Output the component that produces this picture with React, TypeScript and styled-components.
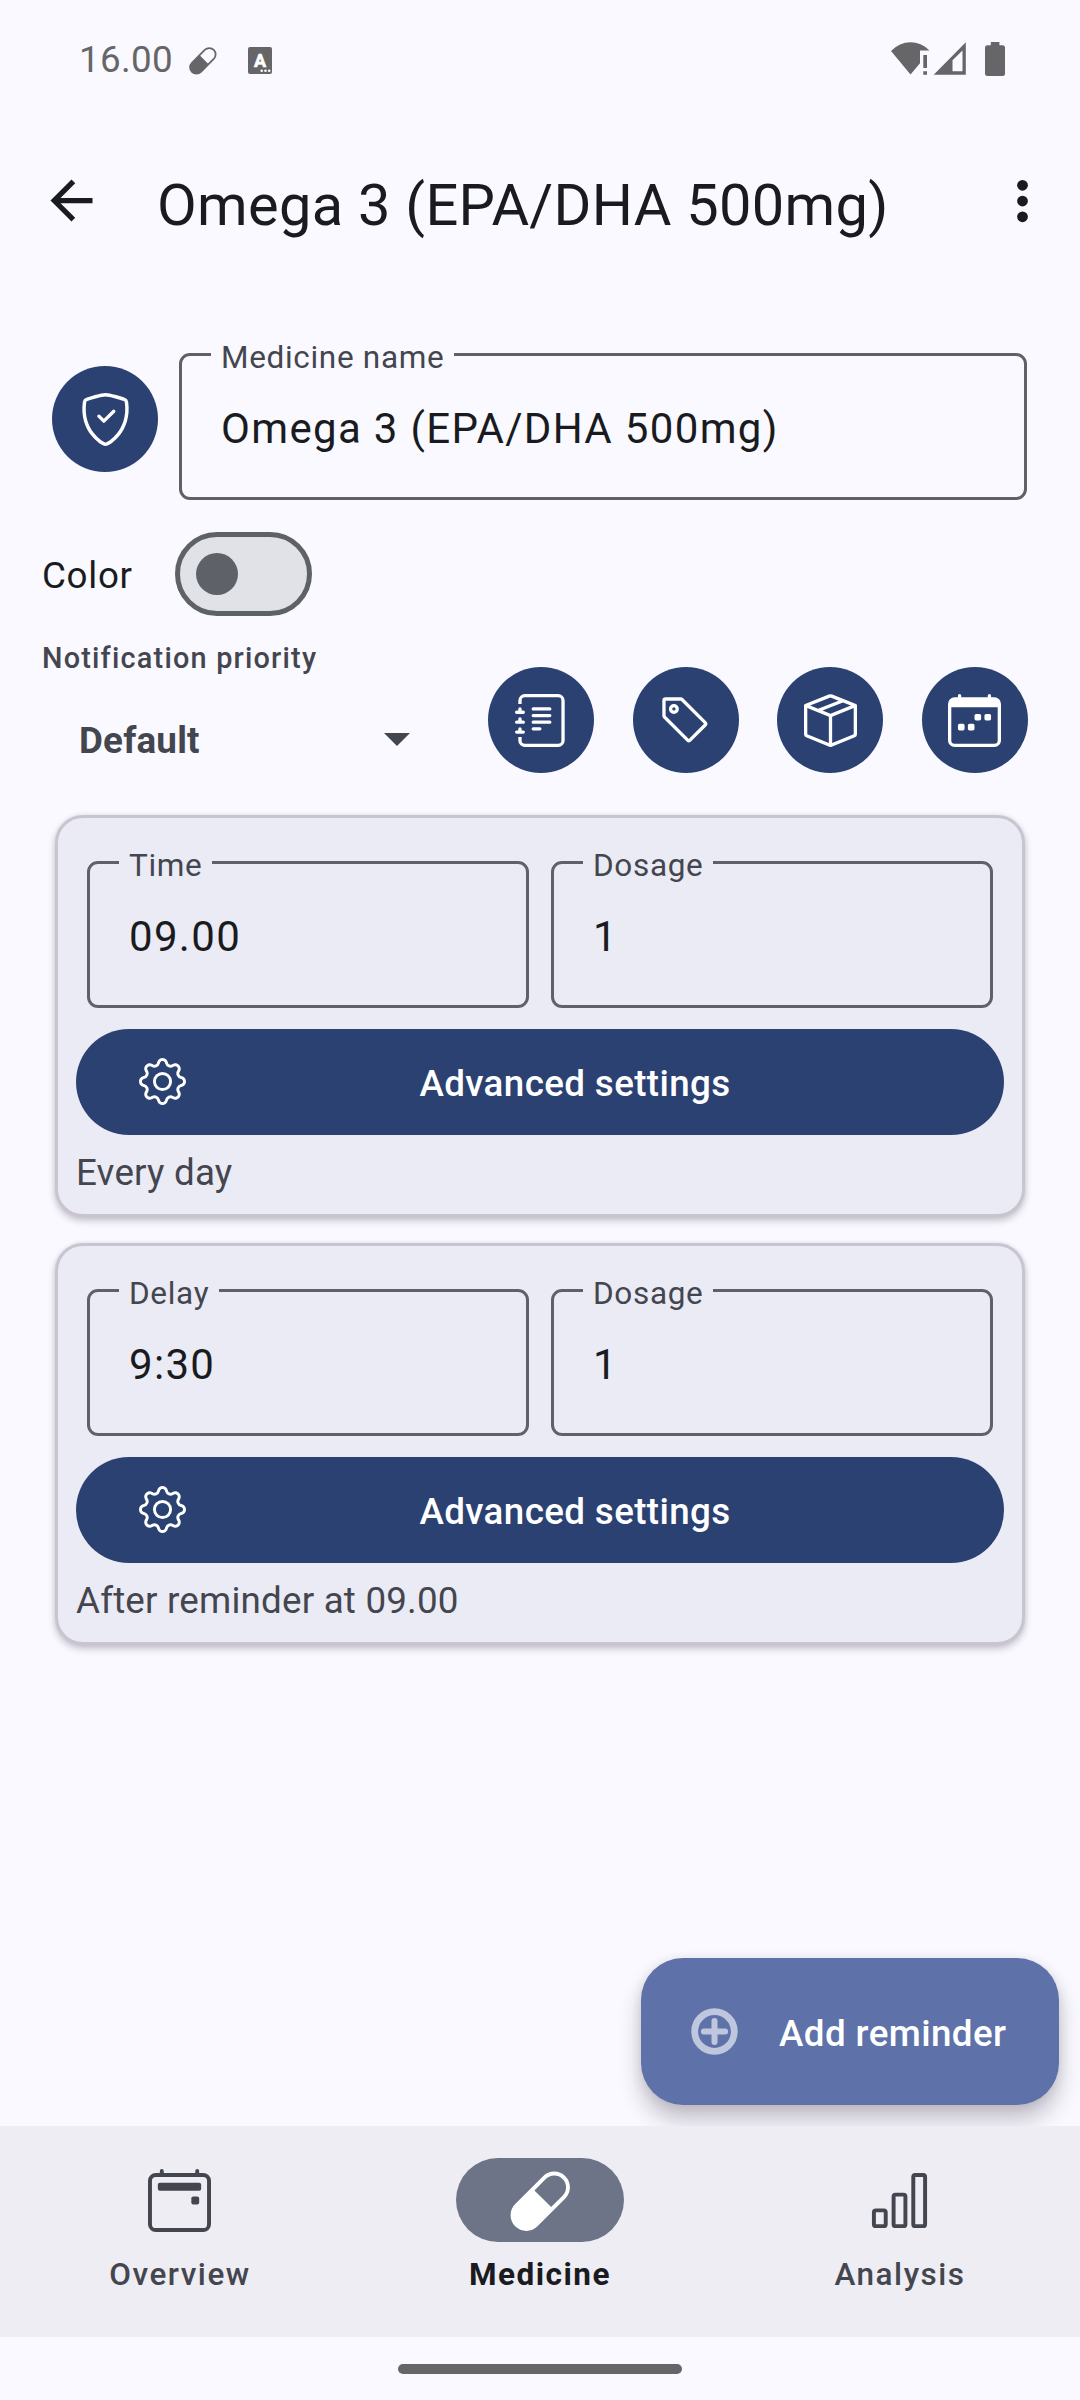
import React from "react";
import styled, { createGlobalStyle, css } from "styled-components";
import {
  BsBarChart,
  BsBoxSeam,
  BsCalendar2Event,
  BsCalendarWeek,
  BsCapsule,
  BsGear,
  BsJournalText,
  BsShieldCheck,
  BsTag,
} from "react-icons/bs";

const c = {
  page: "#f9f9ff",
  card: "#ebebf5",
  cardEdge: "#c9c5d0",
  nav: "#eeedf4",
  primary: "#2a4172",
  fab: "#5e72a9",
  ink: "#1a1b20",
  muted: "#44464f",
  outline: "#5f6068",
  system: "#666668",
};

const Global = createGlobalStyle`
  * { box-sizing: border-box; }
  body { margin: 0; background: ${c.page}; }
`;

const Screen = styled.div`
  width: 1080px;
  height: 2400px;
  display: flex;
  flex-direction: column;
  background: ${c.page};
  color: ${c.ink};
  font-family: Roboto, "Noto Sans", sans-serif;
  font-size: 36.75px;
  overflow: hidden;

  svg {
    display: block;
    flex: none;
  }
`;

/* ---------- system bars ---------- */

const StatusBar = styled.div`
  height: 119px;
  padding: 0 75px 0 79px;
  display: flex;
  align-items: center;
  color: ${c.system};
`;

const Clock = styled.span`
  width: 109px;
  line-height: 43px;
  letter-spacing: 0.35px;
`;

const StatusLeft = styled.div`
  flex: 1;
  display: flex;
  align-items: center;
`;

const NotificationIcons = styled.div`
  display: flex;
  align-items: center;
  gap: 31px;
  padding-top: 2px;
`;

const StatusRight = styled.div`
  display: flex;
  align-items: center;
  padding-bottom: 1px;
`;

const BatteryWrap = styled.div`
  margin-left: 19px;
`;

const GestureArea = styled.div`
  height: 63px;
  padding-top: 27px;
  display: flex;
  justify-content: center;
`;

const GestureHandle = styled.div`
  width: 284px;
  height: 10px;
  border-radius: 5px;
  background: ${c.system};
`;

/* ---------- app bar ---------- */

const AppBar = styled.header`
  height: 163px;
  padding: 0 26px 0 40px;
  display: flex;
  align-items: center;
`;

const Title = styled.h1`
  flex: 1;
  margin: 0;
  padding: 8px 0 0 54px;
  font-size: 57.75px;
  font-weight: 400;
  line-height: 74px;
  letter-spacing: 0.3px;
  white-space: nowrap;
`;

/* ---------- content ---------- */

const Main = styled.main`
  flex: 1;
  min-height: 0;
  position: relative;
  overflow: hidden;
  padding-top: 54px;
`;

const NameRow = styled.div`
  display: flex;
  align-items: flex-start;
  gap: 21px;
  padding: 0 53px 0 52px;
`;

const RoundButton = styled.button<{ $top?: number }>`
  width: 106px;
  height: 106px;
  flex: none;
  margin: ${(p) => p.$top ?? 0}px 0 0;
  padding: 0;
  border: 0;
  border-radius: 50%;
  background: ${c.primary};
  color: #fff;
  display: flex;
  align-items: center;
  justify-content: center;
`;

const FieldBox = styled.fieldset`
  flex: 1;
  min-width: 0;
  height: 164px;
  margin: 0;
  padding: 0 28.5px;
  border: 3px solid ${c.outline};
  border-radius: 11px;
`;

const FieldLabel = styled.legend`
  padding: 7px 9.5px 0 10.5px;
  font-size: 31.5px;
  line-height: 30px;
  letter-spacing: 0.68px;
  color: ${c.muted};
`;

const FieldValue = styled.div`
  padding: 28px 10.5px 0;
  font-size: 42px;
  line-height: 56px;
  letter-spacing: 1.33px;
  white-space: nowrap;
`;

const ColorRow = styled.div`
  margin-top: 32px;
  padding-left: 42px;
  display: flex;
  align-items: center;
`;

const ColorLabel = styled.span`
  width: 133px;
  padding-top: 2px;
  line-height: 43px;
  letter-spacing: 0.7px;
`;

const SwitchTrack = styled.div`
  width: 137px;
  height: 84px;
  padding-left: 16px;
  border: 5.25px solid #5e6167;
  border-radius: 42px;
  background: #e1e2e8;
  display: flex;
  align-items: center;
`;

const SwitchThumb = styled.div`
  width: 42px;
  height: 42px;
  border-radius: 50%;
  background: #5e6167;
`;

const OptionsRow = styled.div`
  margin-top: 23px;
  padding: 0 52px 0 42px;
  height: 143px;
  display: flex;
  justify-content: space-between;
  align-items: flex-start;
`;

const Priority = styled.div`
  width: 368px;
  color: ${c.muted};
`;

const PriorityLabel = styled.div`
  font-size: 28.875px;
  font-weight: 500;
  line-height: 38px;
  letter-spacing: 1.2px;
`;

const PrioritySelect = styled.div`
  height: 84px;
  margin-top: 21px;
  padding-left: 37px;
  display: flex;
  align-items: center;
  justify-content: space-between;
  font-weight: 700;
  letter-spacing: 0.2px;
`;

const Actions = styled.div`
  width: 540px;
  padding-top: 28px;
  display: flex;
  justify-content: space-between;
`;

/* ---------- reminder cards ---------- */

const CardList = styled.div`
  margin-top: 33px;
  padding: 0 55px;
  display: flex;
  flex-direction: column;
  gap: 26px;
`;

const Card = styled.section`
  height: 402px;
  padding: 26px 18px 0;
  border: 3px solid ${c.cardEdge};
  border-radius: 28px;
  background: ${c.card};
  box-shadow: 0 4px 7px rgba(60, 45, 70, 0.26), 0 0 4px rgba(60, 45, 70, 0.1);
`;

const FieldPair = styled.div`
  display: flex;
  gap: 22px;
  padding: 0 11px;
`;

const WideButton = styled.button`
  width: 100%;
  height: 106px;
  margin: 21px 0 0;
  padding: 0 41px 0 63px;
  border: 0;
  border-radius: 53px;
  background: ${c.primary};
  color: #fff;
  font: inherit;
  font-weight: 500;
  display: flex;
  align-items: center;
`;

const WideButtonIcon = styled.span`
  padding-bottom: 1px;
`;

const WideButtonText = styled.span`
  flex: 1;
  text-align: center;
  line-height: 43px;
  letter-spacing: 0.38px;
  padding: 2px 0 0 1px;
`;

const Schedule = styled.p`
  margin: 16px 0 0;
  line-height: 43px;
  letter-spacing: 0.2px;
  color: ${c.muted};
`;

const Fab = styled.button`
  position: absolute;
  right: 21px;
  bottom: 21px;
  width: 418px;
  height: 147px;
  padding: 0 0 0 50px;
  border: 0;
  border-radius: 42px;
  background: ${c.fab};
  color: #fff;
  font: inherit;
  font-weight: 500;
  letter-spacing: 0.42px;
  display: flex;
  align-items: center;
  gap: 41px;
  box-shadow: 0 16px 22px rgba(40, 30, 45, 0.24), 0 2px 12px rgba(40, 30, 45, 0.12);
`;

const FabText = styled.span`
  padding-top: 3px;
  line-height: 43px;
`;

/* ---------- bottom navigation ---------- */

const Nav = styled.nav`
  height: 211px;
  padding-top: 32px;
  display: grid;
  grid-template-columns: repeat(3, 1fr);
  background: ${c.nav};
`;

const NavItem = styled.div<{ $active?: boolean }>`
  display: flex;
  flex-direction: column;
  align-items: center;
  gap: 12px;
  font-size: 31.5px;
  font-weight: 500;
  line-height: 42px;
  letter-spacing: 1.5px;
  color: ${c.muted};
  ${(p) =>
    p.$active &&
    css`
      color: ${c.ink};
      font-weight: 700;
    `}
`;

const NavIndicator = styled.div<{ $active?: boolean }>`
  width: 168px;
  height: 84px;
  padding-right: 1px;
  border-radius: 42px;
  display: flex;
  align-items: center;
  justify-content: center;
  color: ${(p) => (p.$active ? "#fff" : c.muted)};
  background: ${(p) => (p.$active ? "#6e7487" : "transparent")};
`;

/* ---------- icons ---------- */

const KeyboardBadge = () => (
  <svg width="24" height="27" viewBox="0 0 24 27">
    <rect width="24" height="27" rx="2" fill="currentColor" />
    <text
      x="12"
      y="19.6"
      textAnchor="middle"
      fontFamily="Roboto, sans-serif"
      fontWeight="700"
      fontSize="18"
      fill="#fff"
      stroke="#fff"
      strokeWidth="0.6"
    >
      A
    </text>
    <circle cx="13.7" cy="23.7" r="1.3" fill="#fff" />
    <circle cx="17.5" cy="23.7" r="1.3" fill="#fff" />
    <circle cx="21.2" cy="23.7" r="1.3" fill="#fff" />
  </svg>
);

const Wifi = () => (
  <svg width="42" height="34" viewBox="0 0 42 34" fill="currentColor">
    <path d="M0 9Q8.5 .2 19.5 .2Q30 .2 38.5 8.4H29V21.3L19.5 32.5Z" />
    <path d="M32.3 13H36V26H32.3ZM32.3 29.3H36V32.7H32.3Z" />
  </svg>
);

const Signal = () => (
  <svg width="33" height="34" viewBox="0 0 33 34" fill="currentColor">
    <path fillRule="evenodd" d="M.7 32.7L32.8 .3V32.7ZM19.5 18.2V29.3H29.5V8.5Z" />
  </svg>
);

const Battery = () => (
  <svg width="20" height="34" viewBox="0 0 20 34" fill="currentColor">
    <rect x="5.8" width="8.6" height="6" />
    <rect y="3.3" width="20" height="30.7" rx="2.5" />
  </svg>
);

const Back = () => (
  <svg width="63" height="63" viewBox="0 0 24 24" fill="currentColor">
    <path d="M20 11H7.83l5.59-5.59L12 4l-8 8 8 8 1.41-1.41L7.83 13H20v-2z" />
  </svg>
);

const More = () => (
  <svg width="63" height="63" viewBox="0 0 24 24" fill="currentColor">
    <circle cx="12" cy="6.2" r="2.05" />
    <circle cx="12" cy="12.2" r="2.05" />
    <circle cx="12" cy="18.2" r="2.05" />
  </svg>
);

const AddCircle = () => (
  <svg width="47" height="47" viewBox="-23.5 -23.5 47 47" fill="none" stroke="#bec7dd">
    <circle r="19.8" strokeWidth="6.8" />
    <path d="M-10.6 0H10.6M0 -10.6V10.6" strokeWidth="6" strokeLinecap="round" />
  </svg>
);

const Caret = () => (
  <svg width="26" height="15" viewBox="0 0 26 15" fill="currentColor">
    <path d="M0 0H26L13 13Z" />
  </svg>
);

/* ---------- composed parts ---------- */

const Field = ({ label, value }: { label: string; value: string }) => (
  <FieldBox>
    <FieldLabel>{label}</FieldLabel>
    <FieldValue>{value}</FieldValue>
  </FieldBox>
);

interface Reminder {
  label: string;
  value: string;
  dosage: string;
  schedule: string;
}

const reminders: Reminder[] = [
  { label: "Time", value: "09.00", dosage: "1", schedule: "Every day" },
  { label: "Delay", value: "9:30", dosage: "1", schedule: "After reminder at 09.00" },
];

const ReminderCard = ({ label, value, dosage, schedule }: Reminder) => (
  <Card>
    <FieldPair>
      <Field label={label} value={value} />
      <Field label="Dosage" value={dosage} />
    </FieldPair>
    <WideButton>
      <WideButtonIcon>
        <BsGear size={47} />
      </WideButtonIcon>
      <WideButtonText>Advanced settings</WideButtonText>
    </WideButton>
    <Schedule>{schedule}</Schedule>
  </Card>
);

export default function App() {
  return (
    <>
      <Global />
      <Screen>
        <StatusBar>
          <StatusLeft>
            <Clock>16.00</Clock>
            <NotificationIcons>
              <BsCapsule size={29} />
              <KeyboardBadge />
            </NotificationIcons>
          </StatusLeft>
          <StatusRight>
            <Wifi />
            <Signal />
            <BatteryWrap>
              <Battery />
            </BatteryWrap>
          </StatusRight>
        </StatusBar>

        <AppBar>
          <Back />
          <Title>Omega 3 (EPA/DHA 500mg)</Title>
          <More />
        </AppBar>

        <Main>
          <NameRow>
            <RoundButton $top={30}>
              <BsShieldCheck size={53} />
            </RoundButton>
            <Field label="Medicine name" value="Omega 3 (EPA/DHA 500mg)" />
          </NameRow>

          <ColorRow>
            <ColorLabel>Color</ColorLabel>
            <SwitchTrack>
              <SwitchThumb />
            </SwitchTrack>
          </ColorRow>

          <OptionsRow>
            <Priority>
              <PriorityLabel>Notification priority</PriorityLabel>
              <PrioritySelect>
                Default
                <Caret />
              </PrioritySelect>
            </Priority>
            <Actions>
              <RoundButton><BsJournalText size={53} /></RoundButton>
              <RoundButton><BsTag size={53} /></RoundButton>
              <RoundButton><BsBoxSeam size={53} /></RoundButton>
              <RoundButton><BsCalendarWeek size={53} /></RoundButton>
            </Actions>
          </OptionsRow>

          <CardList>
            {reminders.map((r) => (
              <ReminderCard key={r.label} {...r} />
            ))}
          </CardList>

          <Fab>
            <AddCircle />
            <FabText>Add reminder</FabText>
          </Fab>
        </Main>

        <Nav>
          <NavItem>
            <NavIndicator><BsCalendar2Event size={63} /></NavIndicator>
            Overview
          </NavItem>
          <NavItem $active>
            <NavIndicator $active><BsCapsule size={63} /></NavIndicator>
            Medicine
          </NavItem>
          <NavItem>
            <NavIndicator><BsBarChart size={63} /></NavIndicator>
            Analysis
          </NavItem>
        </Nav>

        <GestureArea>
          <GestureHandle />
        </GestureArea>
      </Screen>
    </>
  );
}
